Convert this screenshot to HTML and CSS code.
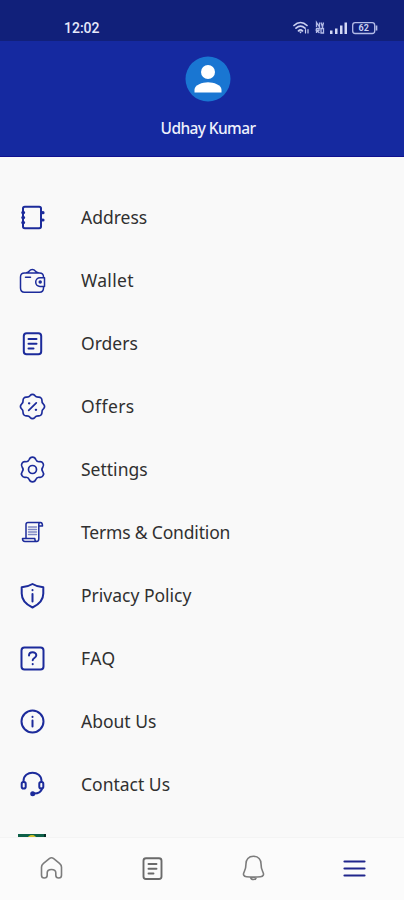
FILE: index.html
```html
<!DOCTYPE html>
<html lang="en">
<head>
  <meta charset="UTF-8" />
  <meta name="viewport" content="width=device-width, initial-scale=1.0"/>
  <title>Menu</title>
  <link rel="stylesheet" href="styles.css">
</head>
<body>
  <div class="app">
    <div class="status-bar">
      <span class="time">12:02</span>
      <svg class="status-icons" width="86" height="16" viewBox="0 0 86 16">
        <g fill="none" stroke="#c9cff0" stroke-width="1.7" stroke-linecap="round">
          <path d="M1 5.500C5 1.500 10 1.500 14 5.500M3 8.200c3-2.700 6-2.700 9 0M5.500 10.800c1.500-1.400 2.500-1.400 4 0"/>
          <path d="M12.500 9.500v3.500M15 9.500v3.500" stroke-width="1.200"/>
        </g>
        <path d="M6 11.500h3L7.500 13.500z" fill="#c9cff0"/>
        <path d="M23.500 7V2.500l3 4.500V2.500M28 2.500l1.500 4.500 1-4.500M23.500 13V8.500H26v2h-2.500l3 2.500M28 8.500h2.500V13H28z" fill="none" stroke="#b4bce8" stroke-width="1.300"/>
        <path d="M37 10.500h2.500V14H37zM42 8.500h2.500V14H42zM47 5.500h2.500V14H47zM51.500 2.500H54V14h-2.500z" fill="#d3d8f5"/>
        <rect x="59.700" y="2.700" width="22" height="10.800" rx="2.500" fill="none" stroke="#b4bce8" stroke-width="1.300"/>
        <path d="M83.500 5.500v5" stroke="#b4bce8" stroke-width="1.700"/>
        <text x="70.700" y="11.200" text-anchor="middle" class="battery-text">62</text>
      </svg>
    </div>

    <header class="profile">
      <svg class="avatar" width="46" height="46" viewBox="0 0 46 46">
        <circle cx="23" cy="23" r="22.500" fill="#1976d2"/>
        <circle cx="23" cy="16" r="7" fill="#fff"/>
        <path d="M9.500 36.500v-2.800C9.500 29 17.500 26.300 23 26.300S36.500 29 36.500 33.700v2.800z" fill="#fff"/>
      </svg>
      <div class="profile-name">Udhay Kumar</div>
    </header>

    <main class="menu">
      <a class="menu-item">
        <svg class="icon" viewBox="0 0 29 29">
          <rect x="5" y="3.700" width="18" height="21.600" rx="1.800"/>
          <path d="M4.800 9.500h.8M4.800 14.500h.8M4.800 19.500h.8M24.700 9.700h.3M24.700 17h.3" stroke-width="3.200"/>
        </svg>
        <span class="w-address">Address</span>
      </a>
      <a class="menu-item">
        <svg class="icon thin" viewBox="0 0 29 29">
          <path d="M25.500 11.500V11c0-2.500-1.500-4-4-4H6.500C4 7 2.500 8.700 2.500 11v11c0 2.500 1.500 4.200 4 4.200h15c2.500 0 4-1.700 4-4.200v-1.500M8.500 6.800c1-.3 2-.8 2.800-1.800 1.500-2 4.500-2 6 0 .8 1 1.800 1.500 3 1.800M7.500 11.300h5M26.500 11.800H22a4.300 4.300 0 0 0 0 8.600h4.500z"/>
          <circle cx="22.200" cy="16" r="1" fill="#1c2b9b"/>
        </svg>
        <span class="w-wallet">Wallet</span>
      </a>
      <a class="menu-item">
        <svg class="icon" viewBox="0 0 29 29">
          <rect x="5.800" y="4.300" width="17.400" height="21" rx="2.800"/>
          <path d="M10.500 10h8M10.500 14.800h8M10.500 19.500h5"/>
        </svg>
        <span class="w-orders">Orders</span>
      </a>
      <a class="menu-item">
        <svg class="icon badge" viewBox="0 0 29 29">
          <path d="M12.300 3.400a3 3 0 0 1 4.400 0 4.500 4.500 0 0 0 4.100 1.700 3 3 0 0 1 3.100 3.100 4.500 4.500 0 0 0 1.700 4.100 3 3 0 0 1 0 4.400 4.500 4.500 0 0 0-1.700 4.100 3 3 0 0 1-3.100 3.100 4.500 4.500 0 0 0-4.100 1.700 3 3 0 0 1-4.400 0 4.500 4.500 0 0 0-4.100-1.700 3 3 0 0 1-3.100-3.100 4.500 4.500 0 0 0-1.700-4.100 3 3 0 0 1 0-4.400 4.500 4.500 0 0 0 1.700-4.100 3 3 0 0 1 3.100-3.100 4.500 4.500 0 0 0 4.100-1.700z"/>
          <path d="M18.300 10.800l-7.600 7.600"/>
          <path d="M11 11.300h.3M17.800 17.800h.3" stroke-width="2.200"/>
        </svg>
        <span class="w-offers">Offers</span>
      </a>
      <a class="menu-item">
        <svg class="icon badge" viewBox="0 0 29 29">
          <path d="M11.200 4.500A3.500 3.500 0 0 1 17.800 4.500 3.500 3.500 0 0 0 21.500 6.700 3.500 3.500 0 0 1 24.800 12.300 3.500 3.500 0 0 0 24.800 16.700 3.500 3.500 0 0 1 21.500 22.300 3.500 3.500 0 0 0 17.800 24.500 3.500 3.500 0 0 1 11.200 24.500 3.500 3.500 0 0 0 7.500 22.300 3.500 3.500 0 0 1 4.200 16.700 3.500 3.500 0 0 0 4.200 12.300 3.500 3.500 0 0 1 7.500 6.700 3.500 3.500 0 0 0 11.200 4.500z"/>
          <circle cx="14.500" cy="14.500" r="4"/>
        </svg>
        <span class="w-settings">Settings</span>
      </a>
      <a class="menu-item">
        <svg class="icon thin" viewBox="0 0 29 29">
          <path d="M8 20.500V6.500c0-1.300.7-2 2-2h12.500c1.500 0 2 1 2 3.500h-3.700v12.500M22.500 4.500c-1.200 0-1.700.8-1.700 2V8M4.500 20.500h12.300c0 2 .6 3 2 3s2-.8 2-3M4.500 20.500c0 2.200.7 3 2.500 3h12"/>
          <path d="M10.500 9h8M10.500 11.500h8M10.500 14h8M10.500 16.500h8" stroke="#7d86c4" stroke-width="1.400"/>
        </svg>
        <span class="w-terms">Terms &amp; Condition</span>
      </a>
      <a class="menu-item">
        <svg class="icon" viewBox="0 0 29 29">
          <path d="M14.500 3c3.200 2 6.800 3 10.800 3.300v6.200c0 6-4 10.800-10.800 14-6.800-3.200-10.800-8-10.800-14V6.300C7.700 6 11.300 5 14.500 3z"/>
          <path d="M14.500 13v7.500M14.500 9v.3"/>
        </svg>
        <span class="w-privacy">Privacy Policy</span>
      </a>
      <a class="menu-item">
        <svg class="icon" viewBox="0 0 29 29">
          <rect x="3.500" y="3.500" width="22" height="22" rx="3"/>
          <path d="M11 11.500c0-4.300 7.300-4.300 7.300-.2 0 2.700-3.600 2.700-3.600 5M14.700 20v.3"/>
        </svg>
        <span class="w-faq">FAQ</span>
      </a>
      <a class="menu-item">
        <svg class="icon" viewBox="0 0 29 29">
          <circle cx="14.500" cy="14.500" r="11"/>
          <path d="M14.500 13.500v6M14.500 9.700v.3"/>
        </svg>
        <span class="w-about">About Us</span>
      </a>
      <a class="menu-item">
        <svg class="icon" viewBox="0 0 29 29">
          <path d="M5.500 12v-1c0-11 18-11 18 0v1M24 18.500c-.7 3.500-3.500 5-8 5"/>
          <rect x="3.700" y="12" width="4" height="6.500" rx="1.800"/>
          <rect x="21.300" y="12" width="4" height="6.500" rx="1.800"/>
          <circle cx="14.700" cy="23.700" r="1.500" fill="#1c2b9b"/>
        </svg>
        <span class="w-contact">Contact Us</span>
      </a>
      <a class="menu-item">
        <svg class="flag" width="28" height="28" viewBox="0 0 28 28">
          <path d="M0 0h28v28H0z" fill="#0d6048"/>
          <path d="M26 0h2v28h-2z" fill="#082c25"/>
          <circle cx="14" cy="6" r="5" fill="#d2c22c"/>
        </svg>
      </a>
    </main>

    <nav class="bottom-nav">
      <svg class="nav-icon" viewBox="0 0 29 29">
        <path d="M4.500 13.300c0-1.800.6-2.900 2-4L12.300 4.600c1.500-1.200 2.900-1.200 4.400 0l5.800 4.700c1.400 1.100 2 2.200 2 4v8c0 1.800-1 2.700-2.700 2.700s-3-.9-3-2.700v-2.500c0-2-1.500-3.300-4.300-3.300s-4.300 1.300-4.300 3.300v2.500c0 1.800-1.200 2.700-3 2.700s-2.700-.9-2.700-2.700z"/>
      </svg>
      <svg class="nav-icon doc" viewBox="0 0 29 29">
        <rect x="5.500" y="4.300" width="18" height="20.700" rx="2.500"/>
        <path d="M10.500 10h8M10.500 14.800h8M10.500 19.500h5"/>
      </svg>
      <svg class="nav-icon" viewBox="0 0 29 29">
        <path d="M14.500 2.300c-5 0-7.500 3.300-7.500 7.500 0 3.800-.5 5.700-1.800 8-1.500 2.600-.6 4.500 2.300 4.900 4.500.6 9.500.6 14 0 2.900-.4 3.800-2.300 2.300-4.900-1.300-2.300-1.800-4.200-1.800-8 0-4.200-2.500-7.500-7.500-7.500zM11.500 23.300c.8 3 5.200 3 6 0"/>
      </svg>
      <svg class="nav-icon active" viewBox="0 0 29 29">
        <path d="M4.500 7.500h20M4.500 14.500h20M4.500 21.500h20"/>
      </svg>
    </nav>
  </div>
</body>
</html>
```

FILE: styles.css
```css
:root {
  --blue: #1529a0;
  --blue-dark: #11207a;
  --icon: #1c2b9b;
  --page: #f9f9f9;
  --text: #303030;
}

* {
  box-sizing: border-box;
}

body {
  margin: 0;
  font-family: "Noto Sans", "Open Sans", sans-serif;
  background: var(--page);
  color: var(--text);
}

.app {
  display: flex;
  flex-direction: column;
  height: 900px;
  overflow: hidden;
}

.status-bar {
  flex: none;
  display: flex;
  justify-content: space-between;
  align-items: center;
  height: 41px;
  padding: 15px 25px 0 64px;
  background: var(--blue-dark);
}

.time {
  color: #e6e9fa;
  font-family: Roboto, sans-serif;
  font-size: 14px;
  font-weight: 500;
}

.battery-text {
  fill: #c9cff0;
  font-family: Roboto, sans-serif;
  font-size: 9px;
  font-weight: 700;
}

.profile {
  flex: none;
  display: flex;
  flex-direction: column;
  align-items: center;
  height: 116px;
  padding: 15px 0 0 12px;
  background: var(--blue);
  border-bottom: 1px solid #10108f;
}

.profile-name {
  margin-top: 15px;
  color: #eef0fc;
  font-size: 15.5px;
  font-weight: 500;
  letter-spacing: -0.6px;
  line-height: 22px;
}

.menu {
  flex: 1;
  min-height: 0;
  padding-top: 29px;
  overflow: hidden;
}

.menu-item {
  display: flex;
  align-items: center;
  gap: 34px;
  height: 63px;
  padding-left: 18px;
  font-size: 17.5px;
  white-space: nowrap;
}

.menu-item span {
  padding-bottom: 2px;
}

.w-wallet {
  letter-spacing: 0.3px;
}

.w-offers {
  letter-spacing: 0.4px;
}

.w-terms {
  letter-spacing: -0.18px;
}

.w-faq {
  letter-spacing: 0.5px;
}

.icon {
  flex: none;
  width: 29px;
  height: 29px;
  fill: none;
  stroke: var(--icon);
  stroke-width: 2;
  stroke-linecap: round;
  stroke-linejoin: round;
}

.icon.thin {
  stroke-width: 1.5;
}

.icon.badge {
  stroke-width: 1.7;
}

.bottom-nav {
  flex: none;
  display: grid;
  grid-template-columns: repeat(4, 101px);
  place-items: center;
  height: 63px;
  padding: 0 0 2px 1px;
  background: #fbfbfb;
  border-top: 1px solid #f4f4f4;
}

.nav-icon {
  width: 29px;
  height: 29px;
  fill: none;
  stroke: #7c7c7c;
  stroke-width: 1.6;
  stroke-linecap: round;
  stroke-linejoin: round;
}

.nav-icon.doc {
  stroke: #6a6a6a;
  stroke-width: 1.9;
}

.nav-icon.active {
  stroke: #20268c;
  stroke-width: 2.2;
}
```
